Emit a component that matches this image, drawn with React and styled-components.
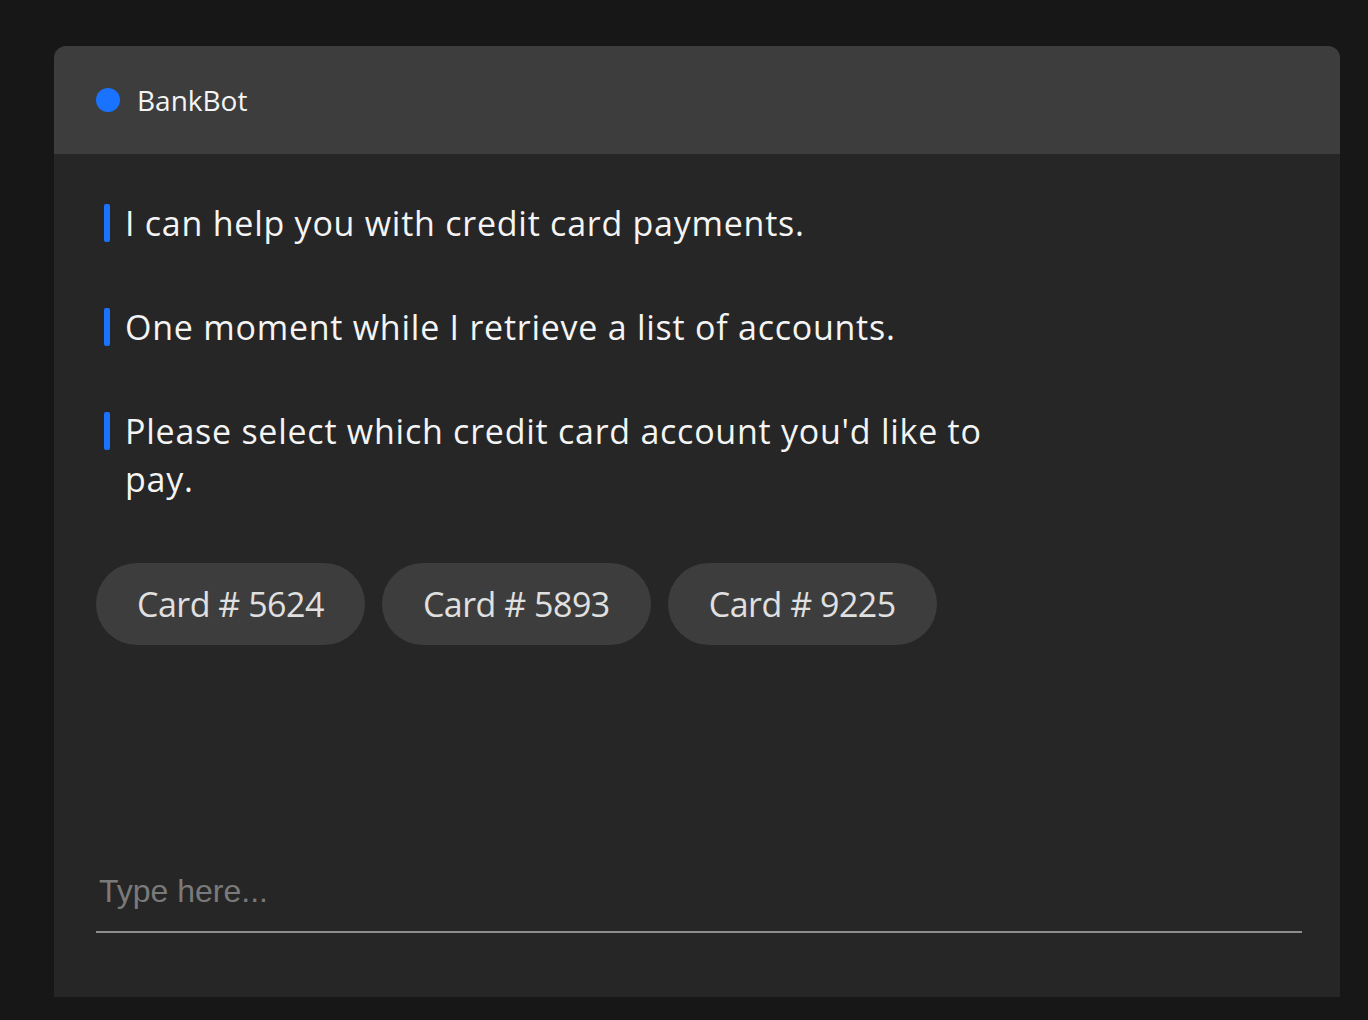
import styled, { createGlobalStyle } from 'styled-components'

const GlobalStyle = createGlobalStyle`
	html,
	body {
		margin: 0;
		padding: 0;
		background: #171717;
	}

	body {
		font-family: 'Open Sans', 'Noto Sans', sans-serif;
	}
`

const Page = styled.div`
	padding: 46px 28px 0 54px;
	min-height: 1020px;
	box-sizing: border-box;
`

const Panel = styled.section`
	height: 951px;
	display: flex;
	flex-direction: column;
	background: #262626;
	border-radius: 12px 12px 0 0;
	overflow: hidden;
`

const Header = styled.header`
	height: 108px;
	flex-shrink: 0;
	display: flex;
	align-items: center;
	gap: 17px;
	padding: 0 42px;
	background: #3d3d3d;
	color: #f4f4f4;
	font-size: 28px;
`

const Dot = styled.span`
	width: 24px;
	height: 24px;
	border-radius: 50%;
	background: #1a73ff;
`

const Conversation = styled.div`
	flex: 1;
	display: flex;
	flex-direction: column;
	align-items: flex-start;
	gap: 56px;
	padding: 45px 42px 0;
`

const Message = styled.p`
	position: relative;
	margin: 0 0 0 8px;
	padding-left: 21px;
	max-width: 880px;
	color: #f4f4f4;
	font-size: 34px;
	letter-spacing: 0.75px;
	line-height: 48px;

	&::before {
		content: '';
		position: absolute;
		left: 0;
		top: 5px;
		width: 6px;
		height: 38px;
		border-radius: 2px;
		background: #1a73ff;
	}
`

const Options = styled.div`
	display: flex;
	gap: 17px;
	margin-top: 4px;
`

const Option = styled.button`
	height: 82px;
	padding: 0 41px;
	border: none;
	border-radius: 41px;
	background: #3d3d3d;
	color: #e0e0e0;
	font-family: inherit;
	font-size: 34px;
	letter-spacing: -0.5px;
	cursor: pointer;
`

const Composer = styled.div`
	padding: 0 38px 64px 42px;
`

const Input = styled.input`
	display: block;
	width: 100%;
	box-sizing: border-box;
	height: 76px;
	padding: 0 3px 6px;
	border: none;
	border-bottom: 2px solid #8e8e8e;
	background: transparent;
	color: #f4f4f4;
	font-family: 'Liberation Sans', Arial, sans-serif;
	font-size: 32px;
	outline: none;

	&::placeholder {
		color: #7a7a7a;
	}
`

const messages = [
	'I can help you with credit card payments.',
	'One moment while I retrieve a list of accounts.',
	"Please select which credit card account you'd like to pay.",
]

const cards = ['5624', '5893', '9225']

export default () => {
	return (
		<Page>
			<GlobalStyle />
			<Panel>
				<Header>
					<Dot />
					<span>BankBot</span>
				</Header>
				<Conversation>
					{messages.map((m) => (
						<Message key={m}>{m}</Message>
					))}
					<Options>
						{cards.map((c) => (
							<Option key={c}>Card # {c}</Option>
						))}
					</Options>
				</Conversation>
				<Composer>
					<Input placeholder='Type here...' />
				</Composer>
			</Panel>
		</Page>
	)
}
